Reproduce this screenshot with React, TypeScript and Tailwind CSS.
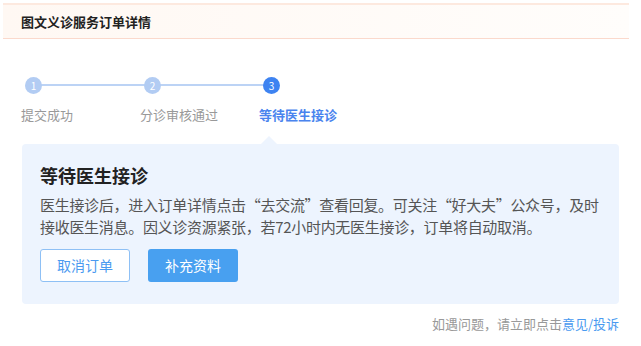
import React from "react";

const steps = [
  { n: 1, label: "提交成功", active: false },
  { n: 2, label: "分诊审核通过", active: false },
  { n: 3, label: "等待医生接诊", active: true },
];

export default function App() {
  return (
    <div
      className="w-[641px] h-[346px] bg-white overflow-hidden"
      style={{ fontFamily: '"Noto Sans CJK SC", "Noto Sans", sans-serif' }}
    >
      {/* header */}
      <div className="pt-[3px] pl-[3px] pr-[12px]">
        <div className="h-[36px] border-t-2 border-b border-t-[#fde9df] border-b-[#fbd9cc] bg-gradient-to-r from-[#fff8f3] to-[#fffdfb] flex items-center pl-[18px]">
          <h1 className="text-[13px] font-bold text-[#222] leading-none">图文义诊服务订单详情</h1>
        </div>
      </div>

      {/* steps */}
      <div className="pl-[21px] pt-[38px] flex">
        {steps.map((s, i) => (
          <div key={s.n} className="w-[119px] flex flex-col">
            <div className="relative h-[17px] flex items-center">
              {i < steps.length - 1 && (
                <div className="absolute left-[12px] right-[-12px] top-[7px] h-[2px] bg-[#bcd3f5]" />
              )}
              <div
                className={
                  "relative ml-[4px] w-[17px] h-[17px] rounded-full flex items-center justify-center text-[10px] text-white leading-none " +
                  (s.active ? "bg-[#3e83f1]" : "bg-[#b2ccf3]")
                }
              >
                {s.n}
              </div>
            </div>
            <div
              className={
                "mt-[14px] text-[13px] leading-none whitespace-nowrap " +
                (s.active ? "text-[#4a84ee] font-bold" : "text-[#999]")
              }
            >
              {s.label}
            </div>
          </div>
        ))}
      </div>

      {/* panel */}
      <div className="relative ml-[22px] mt-[23px] w-[597px] rounded-[4px] bg-[#edf4fe] pl-[18px] pr-[14px] pt-[20px] pb-[22px]">
        <div className="absolute left-[239px] top-[-8px] w-0 h-0 border-l-[8px] border-r-[8px] border-b-[8px] border-l-transparent border-r-transparent border-b-[#edf4fe]" />
        <h2 className="text-[18px] font-bold text-[#222] leading-[22px]">等待医生接诊</h2>
        <p className="mt-[8px] text-[15px] tracking-[-0.3px] leading-[22px] text-[#555]">
          医生接诊后，进入订单详情点击“去交流”查看回复。可关注“好大夫”公众号，及时接收医生消息。因义诊资源紧张，若72小时内无医生接诊，订单将自动取消。
        </p>
        <div className="mt-[11px] flex gap-[18px]">
          <button className="w-[90px] h-[33px] rounded-[3px] border border-[#8ec0f5] bg-white text-[14px] text-[#4a9af0]">
            取消订单
          </button>
          <button className="w-[90px] h-[33px] rounded-[3px] bg-[#48a0f0] text-[14px] text-white">
            补充资料
          </button>
        </div>
      </div>

      {/* footer */}
      <div className="w-[619px] mt-[13px] text-right text-[13px] leading-none text-[#999]">
        如遇问题，请立即点击<span className="text-[#4a9af0]">意见/投诉</span>
      </div>
    </div>
  );
}
